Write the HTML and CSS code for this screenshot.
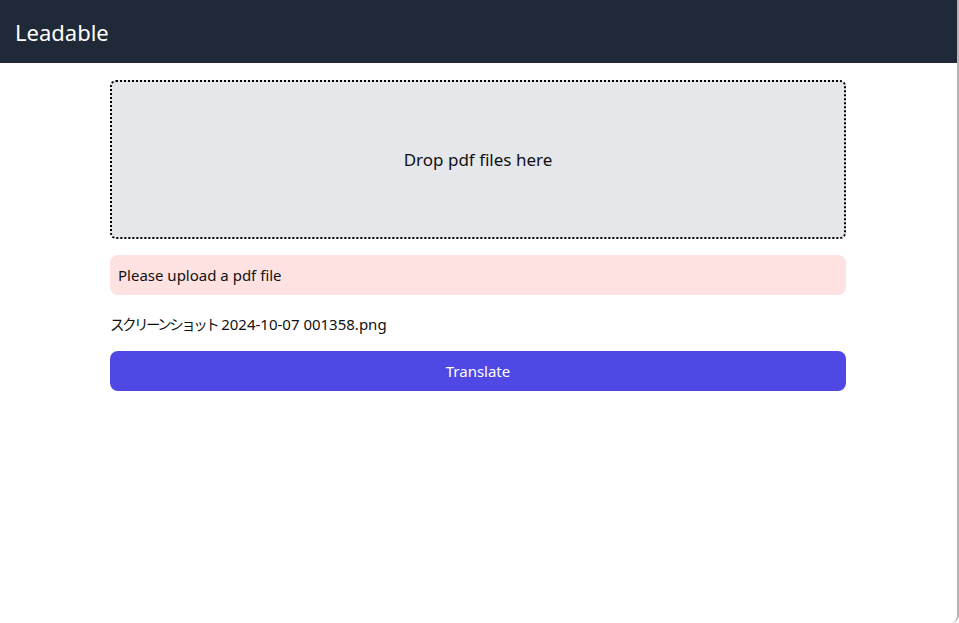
FILE: index.html
```html
<!DOCTYPE html>
<html lang="ja">
<head>
<meta charset="utf-8">
<title>Leadable</title>
<link rel="stylesheet" href="styles.css">
</head>
<body>
<div class="frame">
  <header class="topbar">
    <span class="brand">Leadable</span>
  </header>
  <main class="container">
    <div class="dropzone">Drop pdf files here</div>
    <div class="alert">Please upload a pdf file</div>
    <div class="filename"><span class="jp">スクリーンショット</span> 2024-10-07 001358.png</div>
    <button class="btn">Translate</button>
  </main>
</div>
</body>
</html>
```
FILE: styles.css
```css
html, body {
  margin: 0;
  padding: 0;
  background: #ffffff;
}
body {
  font-family: "Noto Sans", "Noto Sans CJK JP", sans-serif;
  color: #111111;
}
.frame {
  box-sizing: border-box;
  width: 959px;
  height: 623px;
  border-right: 2px solid #b4b4b4;
  border-bottom-right-radius: 8px;
  border-bottom-left-radius: 4px;
  overflow: hidden;
  background: #ffffff;
}
.topbar {
  height: 63px;
  background: #1f2937;
  display: flex;
  align-items: center;
  padding-left: 15px;
}
.brand {
  color: #ffffff;
  font-size: 22px;
  line-height: 1;
}
.container {
  width: 736px;
  margin-left: 110px;
  padding-top: 17px;
  display: flex;
  flex-direction: column;
}
.dropzone {
  box-sizing: border-box;
  height: 159px;
  background: #e5e7eb;
  border: 2px dotted #000000;
  border-radius: 6px;
  display: flex;
  align-items: center;
  justify-content: center;
  font-size: 17px;
  color: #111111;
}
.alert {
  margin-top: 16px;
  height: 40px;
  background: #fee2e2;
  border-radius: 8px;
  display: flex;
  align-items: center;
  padding-left: 8px;
  font-size: 15px;
  color: #111111;
}
.filename {
  margin-top: 17px;
  height: 24px;
  line-height: 24px;
  font-size: 15px;
  color: #111111;
}
.jp {
  font-size: 14.5px;
  letter-spacing: -2.5px;
}
.btn {
  margin-top: 15px;
  height: 40px;
  border: none;
  border-radius: 8px;
  background: #5048e5;
  color: #ffffff;
  font-family: "Noto Sans", sans-serif;
  font-size: 15px;
  cursor: pointer;
}
```
